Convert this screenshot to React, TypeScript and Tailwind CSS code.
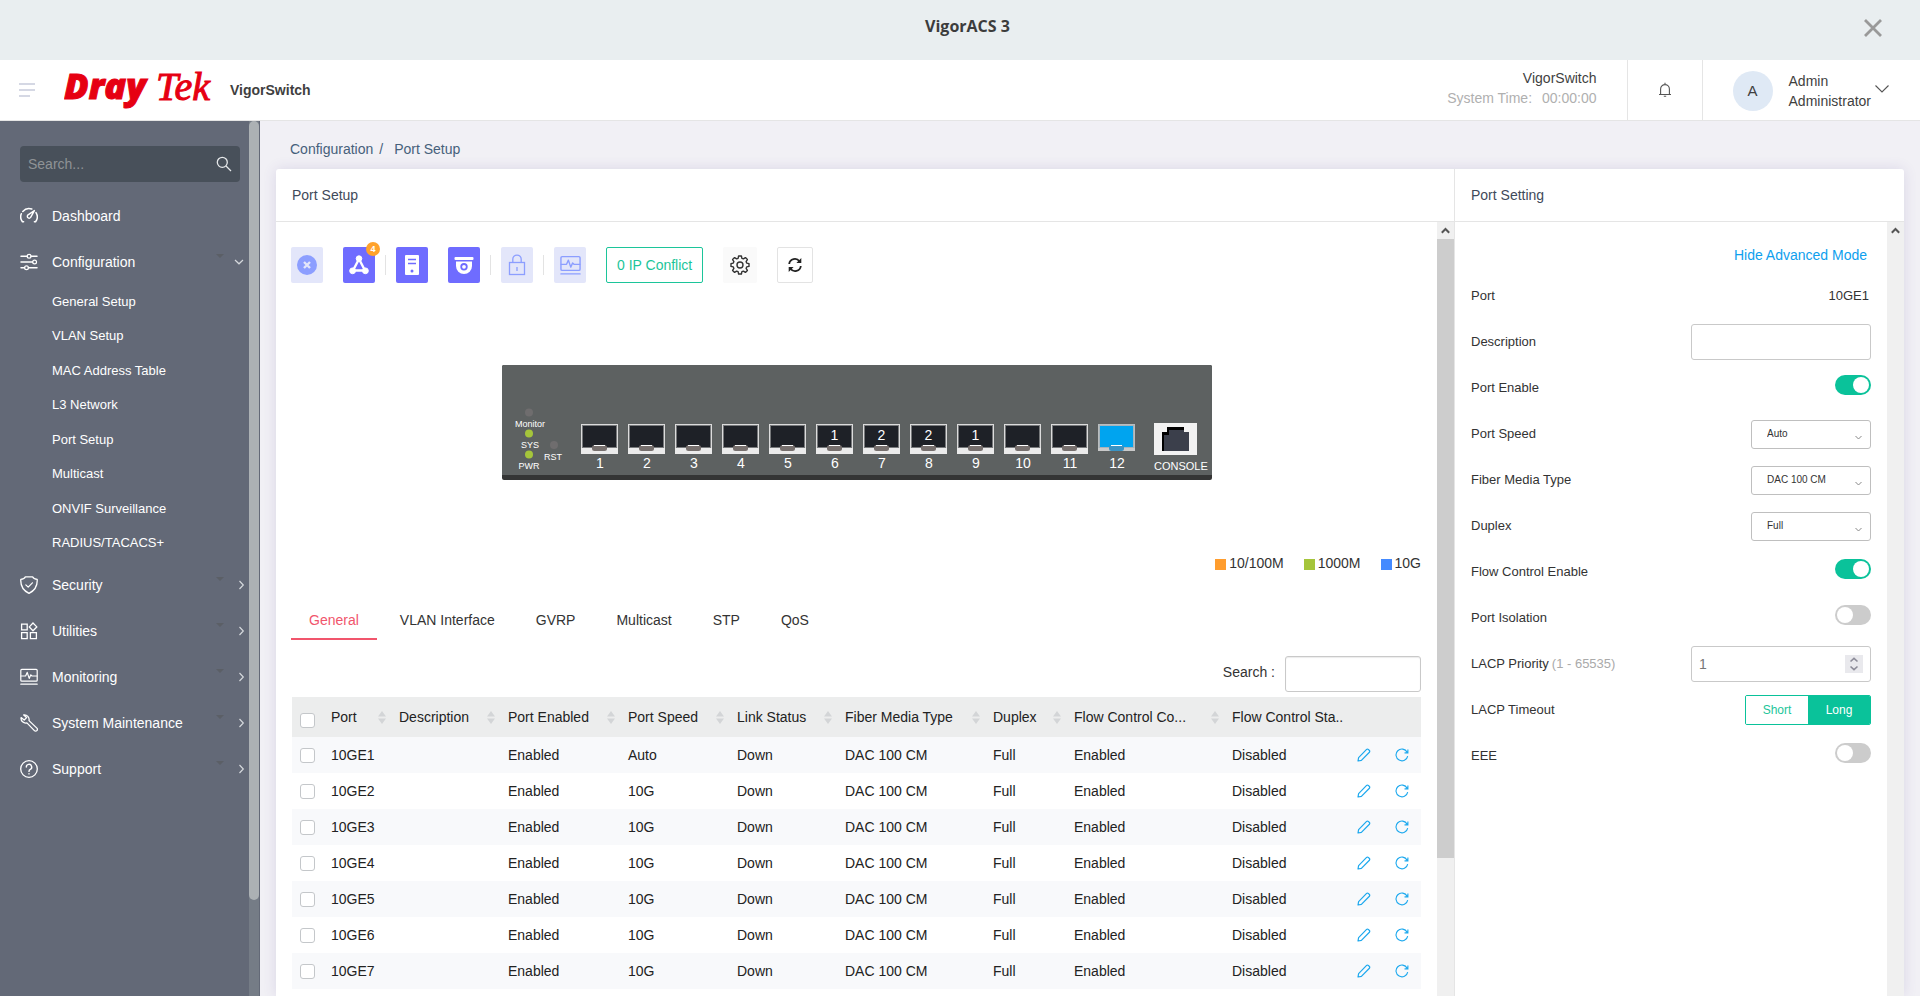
import { useState } from 'react'
import type { ReactNode } from 'react'
import clsx from 'clsx'

const SUB_MENU = [
  'General Setup',
  'VLAN Setup',
  'MAC Address Table',
  'L3 Network',
  'Port Setup',
  'Multicast',
  'ONVIF Surveillance',
  'RADIUS/TACACS+',
]

const TABS = ['General', 'VLAN Interface', 'GVRP', 'Multicast', 'STP', 'QoS']

const COLUMNS = [
  { label: 'Port', width: 68 },
  { label: 'Description', width: 109 },
  { label: 'Port Enabled', width: 120 },
  { label: 'Port Speed', width: 109 },
  { label: 'Link Status', width: 108 },
  { label: 'Fiber Media Type', width: 148 },
  { label: 'Duplex', width: 81 },
  { label: 'Flow Control Co...', width: 158 },
]

const PORTS = Array.from({ length: 7 }, (_, i) => ({
  name: `10GE${i + 1}`,
  speed: i === 0 ? 'Auto' : '10G',
}))

// Connected device counts shown inside the port drawing
const PORT_DEVICES: Record<number, number> = { 6: 1, 7: 2, 8: 2, 9: 1 }

const SPEED_LEGEND = [
  { label: '10/100M', color: 'bg-[#ff9d2e]' },
  { label: '1000M', color: 'bg-[#a5c53b]' },
  { label: '10G', color: 'bg-[#448aff]' },
]

/* ---------- icons ---------- */

function Icon({ children, size = 18 }: { children: ReactNode; size?: number }) {
  return (
    <svg
      width={size}
      height={size}
      viewBox="0 0 18 18"
      fill="none"
      stroke="currentColor"
      strokeWidth="1.2"
      strokeLinecap="round"
      strokeLinejoin="round"
      className="shrink-0"
      aria-hidden="true"
    >
      {children}
    </svg>
  )
}

const DashboardIcon = () => (
  <Icon>
    <path d="M3.6 14.8H2.4A8.2 8.2 0 0 1 1.3 6.8M2.8 4.4A8.2 8.2 0 0 1 11.8 2M16 5.6a8.2 8.2 0 0 1-.4 9.2h-1.2" strokeWidth="1.5" />
    <path d="M14.4 3.6 10.6 10.4a1.8 1.8 0 1 1-2.9-2.2z" strokeWidth="1.4" />
  </Icon>
)

const SlidersIcon = () => (
  <Icon>
    <path d="M1 3.2h6.2M11 3.2h6M1 9h11.6M1 14.8h3.6M8.4 14.8H17" strokeWidth="1.5" />
    <circle cx="9.1" cy="3.2" r="1.9" />
    <circle cx="14.6" cy="9" r="1.9" />
    <circle cx="6.5" cy="14.8" r="1.9" />
  </Icon>
)

const ShieldIcon = () => (
  <Icon>
    <path d="M5.4.8h7.2c.6 1.4 2 2.3 4.6 2.6C17.6 9.6 14.2 14.8 9 17.4 3.8 14.8.4 9.6.8 3.4 3.4 3.1 4.8 2.2 5.4.8z" strokeWidth="1.3" />
    <path d="m5.8 8.8 2.4 2.4 4.2-4.4" />
  </Icon>
)

const UtilitiesIcon = () => (
  <Icon>
    <path d="M1.6 2.2h5.6v5.6H1.6zM1.6 10.6h5.6v6H1.6zM10.4 10.6h6v6h-6zM13 1l3.8 3.9L13 8.8 9.3 4.9z" strokeWidth="1.3" strokeLinejoin="miter" />
  </Icon>
)

const MonitorIcon = ({ size }: { size?: number }) => (
  <Icon size={size}>
    <rect x=".8" y="1.4" width="16.4" height="11.8" rx="1" />
    <path d="M1 8h4.6l1.6-3.6 2 6 1.6-3.6L12 8h5M.8 16.2h16.4" />
  </Icon>
)

const WrenchIcon = () => (
  <Icon>
    <path d="M3.7.9 6.6 3.6 4.2 6 1.1 3.6a4.7 4.7 0 0 0 5.8 5.3l7.5 7.7a1.7 1.7 0 0 0 2.5-2.5L9 6.6A4.7 4.7 0 0 0 3.7.9z" strokeWidth="1.3" />
  </Icon>
)

const HelpIcon = () => (
  <Icon>
    <circle cx="9" cy="9" r="8.3" strokeWidth="1.3" />
    <path d="M6.3 7a2.7 2.7 0 1 1 4 2.4c-.9.5-1.3 1-1.3 2M9 13.6v.3" strokeWidth="1.4" />
  </Icon>
)

function Chevron({ direction }: { direction: 'down' | 'right' }) {
  return (
    <svg width="12" height="10" viewBox="0 0 12 10" fill="none" stroke="#d5d8dc" strokeWidth="1.2" aria-hidden="true">
      <path d={direction === 'down' ? 'M1 3l4 3.8L9 3' : 'M5.5 1l3.8 4-3.8 4'} />
    </svg>
  )
}

function SortIcon() {
  return (
    <svg width="8" height="13" viewBox="0 0 8 13" fill="#d3d5d7" className="shrink-0" aria-hidden="true">
      <path d="M4 0l4 5.5H0zM4 13l4-5.5H0z" />
    </svg>
  )
}

/* ---------- header ---------- */

function Logo() {
  return (
    <svg width="154" height="58" viewBox="0 0 154 58" fill="#e60012" stroke="#e60012" role="img" aria-label="DrayTek">
      <text x="0" y="38" fontFamily="Open Sans" fontWeight="800" fontStyle="italic" fontSize="36" strokeWidth="1">
        Dray
      </text>
      <text x="92" y="39" fontFamily="Liberation Serif" fontStyle="italic" fontSize="40" strokeWidth="1">
        Tek
      </text>
    </svg>
  )
}

function TopBar() {
  return (
    <div className="flex h-15 shrink-0 items-center bg-[#e9eef0] pr-[37px] pl-[72px]">
      <h1 className="flex-1 pb-2 text-center font-['Open_Sans'] text-base font-bold text-[#3c3c3c]">VigorACS 3</h1>
      <button type="button" aria-label="Close" className="mb-1 text-[#999]">
        <svg width="20" height="20" viewBox="0 0 20 20" fill="none" stroke="currentColor" strokeWidth="2.8">
          <path d="M2 2l16 16M18 2L2 18" />
        </svg>
      </button>
    </div>
  )
}

function Header() {
  return (
    <header className="flex h-[61px] shrink-0 items-stretch border-b border-[#e5e5e5] bg-white text-[#3f3f3f]">
      <div className="flex flex-1 items-center pl-[19px]">
        <button type="button" aria-label="Toggle menu">
          <svg width="16" height="16" viewBox="0 0 16 16" stroke="#c8cbdc" strokeWidth="1.6" aria-hidden="true">
            <path d="M0 2h16M0 8h16M0 14h11" />
          </svg>
        </button>
        <div className="ml-[29px]">
          <Logo />
        </div>
        <span className="ml-3 font-bold">VigorSwitch</span>
      </div>
      <div className="flex flex-col items-end pt-2 pr-[30px] leading-5">
        <span>VigorSwitch</span>
        <span className="flex gap-[10px] text-[#b0b0b0]">
          <span>System Time:</span>
          <span>00:00:00</span>
        </span>
      </div>
      <button type="button" aria-label="Notifications" className="flex w-[76px] items-center justify-center border-x border-[#e5e5e5]">
        <svg width="14" height="16" viewBox="0 0 14 16" fill="none" stroke="#555" strokeWidth="1.1" aria-hidden="true">
          <path d="M1 12.5h12M2.6 12.5V7a4.4 4.4 0 0 1 8.8 0v5.5M7 .8v1.8M5.8 14.3h2.4" />
        </svg>
      </button>
      <button type="button" className="flex items-start pr-[31px] pl-[30px] text-left">
        <span className="mt-[11px] flex size-10 items-center justify-center rounded-full bg-[#dfe9f5] text-[15px]">A</span>
        <span className="mt-[11px] ml-4 flex flex-col leading-5">
          <span>Admin</span>
          <span>Administrator</span>
        </span>
        <svg width="14" height="8" viewBox="0 0 14 8" fill="none" stroke="#555" strokeWidth="1.1" className="mt-[25px] ml-1" aria-hidden="true">
          <path d="M.5.5L7 7l6.5-6.5" />
        </svg>
      </button>
    </header>
  )
}

/* ---------- sidebar ---------- */

function NavItem({ icon, label, open }: { icon: ReactNode; label: string; open?: boolean }) {
  return (
    <a href="#" className="flex h-[46px] items-center pl-5 pr-[3px] text-white">
      {icon}
      <span className="ml-[14px] flex-1">{label}</span>
      {open !== undefined && (
        <>
          <svg width="8" height="16" viewBox="0 0 8 16" fill="#5b5f66" className="mr-[10px]" aria-hidden="true">
            <path d="M0 0h8L4 4z" />
          </svg>
          <Chevron direction={open ? 'down' : 'right'} />
        </>
      )}
    </a>
  )
}

function Sidebar() {
  return (
    <aside className="flex w-[260px] shrink-0 bg-[#636977] pr-px">
      <nav className="flex-1 pt-[25px]">
        <div className="mr-[9px] mb-[11px] ml-5 flex h-9 items-center rounded bg-[#48505a] pr-2">
          <input
            type="search"
            aria-label="Search menu"
            placeholder="Search..."
            className="w-full min-w-0 bg-transparent pl-2 text-white outline-none placeholder:text-[#8f9396]"
          />
          <svg width="16" height="16" viewBox="0 0 16 16" fill="none" stroke="#e6e8ea" strokeWidth="1.3" className="shrink-0" aria-hidden="true">
            <circle cx="6.3" cy="6.3" r="5" />
            <path d="M10 10l5 5" />
          </svg>
        </div>
        <NavItem icon={<DashboardIcon />} label="Dashboard" />
        <NavItem icon={<SlidersIcon />} label="Configuration" open />
        <ul className="mb-px grid h-[276px] auto-rows-fr text-[13px] text-white">
          {SUB_MENU.map((item) => (
            <li key={item} className="flex items-center pl-[52px]">
              <a href="#">{item}</a>
            </li>
          ))}
        </ul>
        <NavItem icon={<ShieldIcon />} label="Security" open={false} />
        <NavItem icon={<UtilitiesIcon />} label="Utilities" open={false} />
        <NavItem icon={<MonitorIcon />} label="Monitoring" open={false} />
        <NavItem icon={<WrenchIcon />} label="System Maintenance" open={false} />
        <NavItem icon={<HelpIcon />} label="Support" open={false} />
      </nav>
      <div className="w-[10px] bg-[#757c86]">
        <div className="h-[89%] rounded-full bg-[#acb1b4]" />
      </div>
    </aside>
  )
}

/* ---------- port setup ---------- */

function ScrollBar({ thumb }: { thumb?: boolean }) {
  return (
    <div className="flex w-[17px] shrink-0 flex-col bg-[#f0f0f0]">
      <div className="flex h-[17px] shrink-0 items-center justify-center">
        <svg width="9" height="7" viewBox="0 0 9 7" fill="none" stroke="#555" strokeWidth="2" aria-hidden="true">
          <path d="M.8 5.8L4.5 2l3.7 3.8" />
        </svg>
      </div>
      {thumb && <div className="h-4/5 bg-[#cdcdcd]" />}
    </div>
  )
}

function ToolButton({ label, active, badge, children }: { label: string; active?: boolean; badge?: number; children: ReactNode }) {
  return (
    <button
      type="button"
      aria-label={label}
      className={clsx(
        'relative flex h-9 w-8 items-center justify-center rounded-xs',
        active ? 'bg-[#6f6cff] text-white' : 'bg-[#e3e6fa] text-[#8c9eff]',
      )}
    >
      {children}
      {badge && (
        <span className="absolute -top-[5px] -right-[5px] flex size-[14px] items-center justify-center rounded-full bg-[#ffa22b] text-[9px] font-bold text-white">
          {badge}
        </span>
      )}
    </button>
  )
}

const Separator = () => <div className="mx-[10px] h-5 w-px bg-[#e3e3e3]" />

function Toolbar() {
  return (
    <div className="flex items-center">
      <div className="flex gap-5">
        <ToolButton label="Clear">
          <svg width="20" height="20" viewBox="0 0 20 20" aria-hidden="true">
            <circle cx="10" cy="10" r="10" fill="currentColor" />
            <path d="M7 7l6 6M13 7l-6 6" stroke="#e3e6fa" strokeWidth="2.4" />
          </svg>
        </ToolButton>
        <ToolButton label="Topology" active badge={4}>
          <svg width="20" height="20" viewBox="0 0 20 20" fill="currentColor" stroke="currentColor" aria-hidden="true">
            <path d="M10 4L4 15.5h12z" fill="none" strokeWidth="2.4" />
            <circle cx="10" cy="3.6" r="2.8" />
            <circle cx="3.6" cy="15.8" r="2.9" />
            <circle cx="16.4" cy="15.8" r="2.9" />
          </svg>
        </ToolButton>
      </div>
      <Separator />
      <div className="flex gap-5">
        <ToolButton label="Servers" active>
          <svg width="14" height="20" viewBox="0 0 14 20" aria-hidden="true">
            <rect width="14" height="20" rx="1" fill="currentColor" />
            <path d="M3 4.5h8M3 8.5h8" stroke="#6f6cff" strokeWidth="1.6" />
            <circle cx="7" cy="16" r="1.5" fill="#6f6cff" />
          </svg>
        </ToolButton>
        <ToolButton label="Cameras" active>
          <svg width="20" height="20" viewBox="0 0 20 20" fill="currentColor" aria-hidden="true">
            <rect x=".5" y="2" width="19" height="3" rx="1" />
            <path d="M2 6.5h16v4.5a8 8 0 0 1-16 0z" />
            <circle cx="10" cy="11.8" r="2.8" stroke="#6f6cff" strokeWidth="1.8" />
          </svg>
        </ToolButton>
      </div>
      <Separator />
      <ToolButton label="Lock">
        <svg width="18" height="22" viewBox="0 0 18 22" fill="none" stroke="currentColor" strokeWidth="1.3" aria-hidden="true">
          <rect x="1.5" y="8.5" width="15" height="12" />
          <path d="M4.8 8.5V5.3a4.2 4.2 0 0 1 8.4 0v3.2M9 13v4" />
        </svg>
      </ToolButton>
      <Separator />
      <div className="flex gap-5">
        <ToolButton label="Monitoring">
          <MonitorIcon size={21} />
        </ToolButton>
        <button type="button" className="h-9 rounded-xs border border-[#1cc59a] px-[10px] text-[#1cc59a]">
          0 IP Conflict
        </button>
        <button type="button" aria-label="Settings" className="flex h-9 w-[34px] items-center justify-center rounded-xs bg-[#fafafa] text-[#333]">
          <svg width="20" height="20" viewBox="0 0 20 20" fill="none" stroke="currentColor" strokeWidth="1.4" strokeLinejoin="round" aria-hidden="true">
            <path d="M8.6 1h2.8l.5 2.3 1.5.6 2-1.3 2 2-1.3 2 .6 1.5 2.3.5v2.8l-2.3.5-.6 1.5 1.3 2-2 2-2-1.3-1.5.6-.5 2.3H8.6l-.5-2.3-1.5-.6-2 1.3-2-2 1.3-2-.6-1.5L1 11.4V8.6l2.3-.5.6-1.5-1.3-2 2-2 2 1.3 1.5-.6z" />
            <circle cx="10" cy="10" r="3" />
          </svg>
        </button>
        <button type="button" aria-label="Refresh" className="flex h-9 w-9 items-center justify-center rounded-xs border border-[#e3e3e3] text-[#222]">
          <svg width="16" height="16" viewBox="0 0 16 16" fill="none" stroke="currentColor" strokeWidth="1.8" aria-hidden="true">
            <path d="M2.2 7A5.6 5.6 0 0 1 12.5 4.6M13.8 9A5.6 5.6 0 0 1 3.5 11.4" />
            <path d="M14.3 1v5H9.4zM1.7 15v-5h4.9z" fill="currentColor" stroke="none" />
          </svg>
        </button>
      </div>
    </div>
  )
}

function PortSlot({ index }: { index: number }) {
  const selected = index === 12
  return (
    <g transform={`translate(${79 + (index - 1) * 47} 59)`}>
      <rect width="37" height="26" fill={selected ? '#b9bdbf' : '#dcdcdc'} />
      <rect y="24" width="37" height={selected ? 3 : 6} fill={selected ? '#c9c9c9' : '#ebebeb'} />
      <rect x="1" y="1" width="35" height="23" fill={selected ? '#a7b3ba' : '#77797b'} />
      <rect x="2" y="2" width="33" height="21" fill={selected ? '#00a4ef' : '#1e2127'} />
      <rect x="11" y="21" width="15" height="6" rx="2.5" fill={selected ? '#3a93c4' : '#766f6d'} />
      <rect x="13" y="21" width="11" height="1" fill="#fff" />
      {PORT_DEVICES[index] && (
        <text x="18.5" y="16" textAnchor="middle" fontSize="14">
          {PORT_DEVICES[index]}
        </text>
      )}
      <text x="19" y="44" textAnchor="middle" fontSize="14">
        {index}
      </text>
    </g>
  )
}

function SwitchDrawing() {
  return (
    <svg
      width="710"
      height="115"
      viewBox="0 0 710 115"
      fill="#fff"
      fontFamily="Liberation Sans"
      className="mx-auto block"
      role="img"
      aria-label="Switch front panel"
    >
      <rect width="710" height="115" rx="2" fill="#343535" />
      <path d="M2 0h706a2 2 0 0 1 2 2v108H0V2a2 2 0 0 1 2-2z" fill="#5d6161" />
      <circle cx="27" cy="47.5" r="4" fill="#6f6d6e" />
      <circle cx="27" cy="68.5" r="4" fill="#a5c53b" />
      <circle cx="27" cy="89.5" r="4" fill="#a5c53b" />
      <circle cx="52" cy="80" r="4" fill="#6f6d6e" />
      <g fontSize="9" textAnchor="middle">
        <text x="28" y="62">Monitor</text>
        <text x="28" y="83">SYS</text>
        <text x="27" y="104">PWR</text>
        <text x="51" y="95">RST</text>
      </g>
      {Array.from({ length: 12 }, (_, i) => (
        <PortSlot key={i} index={i + 1} />
      ))}
      <rect x="652" y="58" width="43" height="32" fill="#f2f2f2" />
      <path d="M660 67h5v-5h17v5h5v19h-27z" fill="#000" />
      <path d="M662 70h5v-5h15v2h5v19h-25z" fill="#3b3f4b" />
      <text x="652" y="105" fontSize="11">
        CONSOLE
      </text>
    </svg>
  )
}

const CHECKBOX =
  'block size-[15px] appearance-none rounded-[3px] border border-[#c4c7ca] bg-white checked:border-[#0ac29a] checked:bg-[#0ac29a]'

function PortTable() {
  return (
    <table className="mt-[5px] w-full table-fixed text-left text-[#222]">
      <colgroup>
        <col style={{ width: 39 }} />
        {COLUMNS.map((col) => (
          <col key={col.label} style={{ width: col.width }} />
        ))}
        <col style={{ width: 120 }} />
        <col style={{ width: 69 }} />
      </colgroup>
      <thead>
        <tr className="h-10 bg-[#eceded]">
          <th className="pt-[6px] pl-2">
            <input type="checkbox" aria-label="Select all ports" className={CHECKBOX} />
          </th>
          {COLUMNS.map((col) => (
            <th key={col.label} className="font-normal whitespace-nowrap">
              <div className="flex items-center justify-between pr-[13px]">
                {col.label}
                <SortIcon />
              </div>
            </th>
          ))}
          <th className="font-normal whitespace-nowrap">Flow Control Sta..</th>
          <th aria-label="Actions" />
        </tr>
      </thead>
      <tbody>
        {PORTS.map((port) => (
          <tr key={port.name} className="h-9 odd:bg-[#f8f9fb]">
            <td className="pl-2">
              <input type="checkbox" aria-label={`Select ${port.name}`} className={CHECKBOX} />
            </td>
            <td>{port.name}</td>
            <td />
            <td>Enabled</td>
            <td>{port.speed}</td>
            <td>Down</td>
            <td>DAC 100 CM</td>
            <td>Full</td>
            <td>Enabled</td>
            <td>Disabled</td>
            <td>
              <div className="flex gap-6 pl-[5px] text-[#1ba8ee]">
                <button type="button" aria-label={`Edit ${port.name}`}>
                  <svg width="14" height="14" viewBox="0 0 14 14" fill="none" stroke="currentColor" strokeWidth="1.2" strokeLinejoin="round" aria-hidden="true">
                    <path d="M1 13l.6-3.4L9.6 1.4a1.2 1.2 0 0 1 1.7 0l1.1 1.1a1.2 1.2 0 0 1 0 1.7L4.4 12.4z" />
                  </svg>
                </button>
                <button type="button" aria-label={`Reset ${port.name}`}>
                  <svg width="14" height="14" viewBox="0 0 15 15" fill="none" stroke="currentColor" strokeWidth="1.2" aria-hidden="true">
                    <path d="M13.6 8.6A6.3 6.3 0 1 1 13 4.5M13.8 1.5v3.7h-3.6" />
                  </svg>
                </button>
              </div>
            </td>
          </tr>
        ))}
      </tbody>
    </table>
  )
}

function PortSetup() {
  const [tab, setTab] = useState('General')

  return (
    <section className="flex min-w-0 flex-1 flex-col">
      <h2 className="flex h-[53px] shrink-0 items-center border-b border-[#e5e5e5] px-4 text-[#3f4a5a]">Port Setup</h2>
      <div className="flex min-h-0 flex-1">
        <div className="min-w-0 flex-1 overflow-hidden pt-[25px] pr-4 pl-[15px]">
          <Toolbar />
          <div className="mt-[82px] pl-px">
            <SwitchDrawing />
          </div>
          <ul className="mt-[73px] flex justify-end gap-5 leading-5">
            {SPEED_LEGEND.map((item) => (
              <li key={item.label} className="flex items-center gap-[3px]">
                <span className={clsx('mt-[3px] size-[11px]', item.color)} />
                {item.label}
              </li>
            ))}
          </ul>
          <div role="tablist" className="mt-[27px] flex gap-[5px]">
            {TABS.map((name) => (
              <button
                key={name}
                type="button"
                role="tab"
                aria-selected={tab === name}
                onClick={() => setTab(name)}
                className={clsx(
                  'h-10 cursor-pointer border-b-2 px-[18px] pt-[2px]',
                  tab === name ? 'border-[#f1556c] text-[#f1556c]' : 'border-transparent',
                )}
              >
                {name}
              </button>
            ))}
          </div>
          <div className="mt-4 flex items-center justify-end gap-[10px]">
            <label htmlFor="port-search" className="pb-1">Search :</label>
            <input
              id="port-search"
              type="text"
              className="h-9 w-[136px] rounded-[3px] border border-[#c9c9c9] px-2 shadow-[inset_0_1px_1px_rgba(0,0,0,0.08)] outline-none"
            />
          </div>
          <div className="pl-px">
            <PortTable />
          </div>
        </div>
        <ScrollBar thumb />
      </div>
    </section>
  )
}

/* ---------- port setting ---------- */

function SettingRow({ label, hint, htmlFor, children }: { label: string; hint?: string; htmlFor?: string; children: ReactNode }) {
  return (
    <div className="flex h-[46px] items-center justify-between">
      <label htmlFor={htmlFor} className="text-[13px]">
        {label}
        {hint && <span className="ml-[3px] text-[#aaa]">{hint}</span>}
      </label>
      {children}
    </div>
  )
}

function Toggle({ id, defaultChecked }: { id: string; defaultChecked?: boolean }) {
  return (
    <input
      id={id}
      type="checkbox"
      role="switch"
      defaultChecked={defaultChecked}
      className="mb-[6px] flex h-5 w-9 cursor-pointer appearance-none items-center rounded-full bg-[#ccc] px-[2px] before:size-4 before:rounded-full before:bg-white checked:justify-end checked:bg-[#0ac29a]"
    />
  )
}

function Select({ id, options }: { id: string; options: string[] }) {
  return (
    <div className="relative">
      <select id={id} className="h-[29px] w-[120px] appearance-none rounded-[3px] border border-[#bfbfbf] bg-white px-[15px] text-[10px] outline-none">
        {options.map((option) => (
          <option key={option}>{option}</option>
        ))}
      </select>
      <svg
        width="7"
        height="5"
        viewBox="0 0 7 5"
        fill="none"
        stroke="#888"
        className="pointer-events-none absolute right-[9px] bottom-[9px]"
        aria-hidden="true"
      >
        <path d="M.5 1l3 3 3-3" />
      </svg>
    </div>
  )
}

function PortSetting() {
  const [timeout, setTimeoutMode] = useState('Long')

  return (
    <section className="flex w-[450px] shrink-0 flex-col border-l border-[#e5e5e5]">
      <h2 className="flex h-[53px] shrink-0 items-center border-b border-[#e5e5e5] px-4 text-[#3f4a5a]">Port Setting</h2>
      <div className="flex min-h-0 flex-1">
        <div className="flex-1 px-4 pt-[23px]">
          <div className="mb-2 flex justify-end pr-1 leading-5">
            <a href="#" className="text-[#0ea0ee]">Hide Advanced Mode</a>
          </div>
          <SettingRow label="Port">
            <span className="pr-[2px] text-[13px]">10GE1</span>
          </SettingRow>
          <SettingRow label="Description" htmlFor="description">
            <input id="description" type="text" className="h-9 w-[180px] rounded-[3px] border border-[#c9c9c9] px-2 outline-none" />
          </SettingRow>
          <SettingRow label="Port Enable" htmlFor="port-enable">
            <Toggle id="port-enable" defaultChecked />
          </SettingRow>
          <SettingRow label="Port Speed" htmlFor="port-speed">
            <Select id="port-speed" options={['Auto', '10G', '1000M']} />
          </SettingRow>
          <SettingRow label="Fiber Media Type" htmlFor="fiber-type">
            <Select id="fiber-type" options={['DAC 100 CM', 'DAC 300 CM']} />
          </SettingRow>
          <SettingRow label="Duplex" htmlFor="duplex">
            <Select id="duplex" options={['Full', 'Half']} />
          </SettingRow>
          <SettingRow label="Flow Control Enable" htmlFor="flow-control">
            <Toggle id="flow-control" defaultChecked />
          </SettingRow>
          <SettingRow label="Port Isolation" htmlFor="port-isolation">
            <Toggle id="port-isolation" />
          </SettingRow>
          <SettingRow label="LACP Priority" hint="(1 - 65535)" htmlFor="lacp-priority">
            <div className="relative">
              <input
                id="lacp-priority"
                type="number"
                min={1}
                max={65535}
                defaultValue={1}
                className="h-9 w-[180px] [appearance:textfield] rounded-[3px] border border-[#c9c9c9] px-[7px] text-[#777] outline-none [&::-webkit-inner-spin-button]:appearance-none"
              />
              <svg width="18" height="18" viewBox="0 0 18 18" fill="none" stroke="#8d8c99" strokeWidth="1.6" className="pointer-events-none absolute top-[9px] right-2" aria-hidden="true">
                <rect width="18" height="18" fill="#e9e9ed" stroke="none" />
                <path d="M5.5 6.5L9 3.3l3.5 3.2M5.5 11.5L9 14.7l3.5-3.2" />
              </svg>
            </div>
          </SettingRow>
          <SettingRow label="LACP Timeout">
            <div role="group" aria-label="LACP Timeout" className="flex h-[30px] overflow-hidden rounded-xs border border-[#0ac29a] text-xs">
              {['Short', 'Long'].map((mode) => (
                <button
                  key={mode}
                  type="button"
                  onClick={() => setTimeoutMode(mode)}
                  className={clsx('w-[62px] cursor-pointer', timeout === mode ? 'bg-[#0ac29a] text-white' : 'bg-white text-[#1cc59a]')}
                >
                  {mode}
                </button>
              ))}
            </div>
          </SettingRow>
          <SettingRow label="EEE" htmlFor="eee">
            <Toggle id="eee" />
          </SettingRow>
        </div>
        <ScrollBar />
      </div>
    </section>
  )
}

export default function App() {
  return (
    <div className="flex h-screen flex-col overflow-hidden font-['Liberation_Sans',sans-serif] text-sm text-[#333]">
      <TopBar />
      <Header />
      <div className="flex min-h-0 flex-1">
        <Sidebar />
        <main className="flex min-w-0 flex-1 flex-col overflow-hidden bg-[#f1f0f5] pr-4 pl-4">
          <div className="flex h-12 shrink-0 items-center gap-[6px] pt-2 pl-[14px] text-[#46607b]">
            <a href="#">Configuration</a>
            <span>/</span>
            <span className="pl-[5px]">Port Setup</span>
          </div>
          <div className="flex min-h-0 flex-1 rounded-t-[3px] bg-white shadow-[0_0_14px_rgba(82,63,150,0.14)]">
            <PortSetup />
            <PortSetting />
          </div>
        </main>
      </div>
    </div>
  )
}
